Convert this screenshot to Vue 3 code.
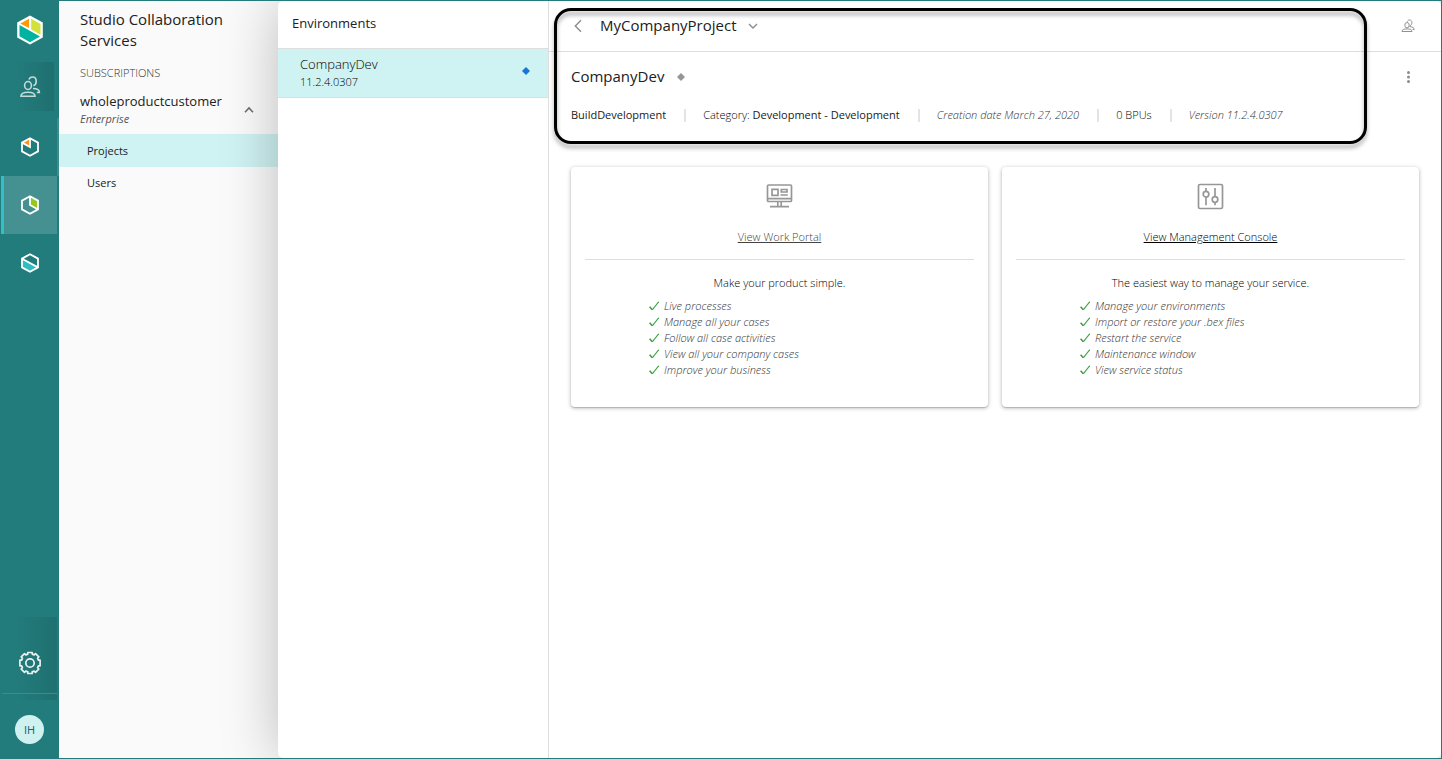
<script setup>
const cards = [
  {
    icon: 'portal',
    link: 'View Work Portal',
    muted: true,
    lead: 'Make your product simple.',
    items: [
      'Live processes',
      'Manage all your cases',
      'Follow all case activities',
      'View all your company cases',
      'Improve your business',
    ],
  },
  {
    icon: 'console',
    link: 'View Management Console',
    muted: false,
    lead: 'The easiest way to manage your service.',
    items: [
      'Manage your environments',
      'Import or restore your .bex files',
      'Restart the service',
      'Maintenance window',
      'View service status',
    ],
  },
]
</script>

<template>
  <div class="app">
    <nav class="rail" aria-label="Applications">
      <a class="logo" href="#" aria-label="Home">
        <svg width="28" height="30" viewBox="0 0 28 30">
          <path d="M14 .5 26.800 7.500v15L14 29.500 1.200 22.500V7.500Z" fill="#fff" />
          <path d="M13 3.800v9.200L4.300 8.500Z" fill="#ff9a00" />
          <path d="M15.200 3.800 24.500 9v10.800l-9.300-5.400Z" fill="#d3e13b" />
          <path d="M3.500 10 24 21.500 14 27.200 3.500 21.200Z" fill="#00b3a1" />
        </svg>
      </a>
      <button class="rail-item people" aria-label="People">
        <svg width="22" height="24" viewBox="0 0 22 24" fill="none" stroke="#c3dcdb" stroke-width="1.600">
          <ellipse cx="9" cy="10.500" rx="3.400" ry="4" />
          <path d="M2 21.300c0-3 2.500-4 7-4s7 1 7 4Z" />
          <path d="M10 4.600c.6-1.800 2-2.600 3.500-2.600 2.200 0 3.700 1.800 3.700 4.200s-1.200 4-2.800 4.400M14 13.500c4 .1 6.400 1.300 6.400 4h-2.600" />
        </svg>
      </button>
      <button class="rail-item first" aria-label="Modeler">
        <svg width="20" height="22" viewBox="0 0 20 22" fill="none" stroke="#fff" stroke-width="1.800">
          <path d="M9.500 3v8L3 7Z" fill="#f7941d" stroke="none" />
          <path d="M10 2.200 18 6.600v8.800L10 19.800 2 15.400V6.600ZM10 2.500V11L2.500 6.900" />
        </svg>
      </button>
      <button class="rail-item active" aria-label="Studio">
        <svg width="20" height="22" viewBox="0 0 20 22" fill="none" stroke="#fff" stroke-width="1.800">
          <path d="M10 3 18 7v8l-8-4Z" fill="#94c81e" stroke="none" />
          <path d="M10 2.200 18 6.600v8.800L10 19.800 2 15.400V6.600ZM10 2.500V11l7.700 4.200" />
        </svg>
      </button>
      <button class="rail-item" aria-label="Automation">
        <svg width="20" height="22" viewBox="0 0 20 22" fill="none" stroke="#fff" stroke-width="1.800">
          <path d="M2 7 18 15.400l-8 4.200-8-4.200Z" fill="#2dbdc3" stroke="none" />
          <path d="M10 2.200 18 6.600v8.800L10 19.800 2 15.400V6.600ZM2 6.800l16 8.600" />
        </svg>
      </button>
      <div class="rail-bottom">
        <button class="gear" aria-label="Settings">
          <svg width="24" height="24" viewBox="0 0 24 24" fill="none" stroke="#e9f2f1" stroke-width="1.700" stroke-linejoin="round">
            <path d="M9.800 1.500h4.400v1.600l2 .8 1.300-1.200 3.300 3.200-1.200 1.400.8 1.900h1.700v5.600h-1.700l-.8 1.900 1.200 1.400-3.300 3.200-1.300-1.200-2 .8v1.600H9.800v-1.600l-2-.8-1.300 1.200-3.300-3.200 1.200-1.400-.8-1.900H1.900V9.200h1.700l.8-1.900-1.200-1.400 3.300-3.200 1.300 1.200 2-.8Z" />
            <circle cx="12" cy="12" r="4.200" />
          </svg>
        </button>
        <div class="account"><button class="avatar">IH</button></div>
      </div>
    </nav>

    <aside class="sidebar">
      <h1>Studio Collaboration Services</h1>
      <p class="caption">SUBSCRIPTIONS</p>
      <button class="subscription">
        <span class="sub-text">
          <span class="sub-name">wholeproductcustomer</span>
          <em>Enterprise</em>
        </span>
        <svg width="12" height="8" viewBox="0 0 12 8" fill="none" stroke="#6e6e6e" stroke-width="1.600"><path d="M2 6.300 6 2l4 4.300" /></svg>
      </button>
      <a class="side-link selected" href="#">Projects</a>
      <a class="side-link" href="#">Users</a>
    </aside>

    <div class="content">
      <section class="environments">
        <h2>Environments</h2>
        <a class="environment" href="#">
          <span class="env-text">
            <span class="env-name">CompanyDev</span>
            <span class="env-version">11.2.4.0307</span>
          </span>
          <svg width="8" height="8" viewBox="0 0 8 8"><path d="M4 0 8 4 4 8 0 4Z" fill="#1976d8" /></svg>
        </a>
      </section>

      <main>
        <header class="head">
          <div class="topbar">
            <button class="icon-btn" aria-label="Back">
              <svg width="12" height="14" viewBox="0 0 12 14" fill="none" stroke="#8c8c8c" stroke-width="1.400"><path d="M9 1.300 3.300 7l5.700 5.700" /></svg>
            </button>
            <span class="project">MyCompanyProject</span>
            <button class="icon-btn" aria-label="Choose project">
              <svg width="12" height="8" viewBox="0 0 12 8" fill="none" stroke="#8c8c8c" stroke-width="1.400"><path d="M2 2l4 4 4-4" /></svg>
            </button>
            <button class="icon-btn end" aria-label="Members">
              <svg width="14" height="14" viewBox="0 0 14 14" fill="none" stroke="#909090" stroke-width="1">
                <ellipse cx="6" cy="6.200" rx="2.200" ry="2.700" />
                <path d="M1 12.500c0-2 1.600-2.400 5-2.600 3.400.2 5 .6 5 2.600Z" />
                <path d="M6.300 2.600C6.800 1.400 7.700 1 8.600 1c1.400 0 2.300 1.100 2.300 2.700 0 1.500-.7 2.700-2 3v1c2.500.3 4.300.8 4.300 2.800h-1.500" />
              </svg>
            </button>
          </div>
          <div class="title-row">
            <h2>CompanyDev</h2>
            <svg width="8" height="8" viewBox="0 0 8 8"><path d="M4 0 8 4 4 8 0 4Z" fill="#969696" /></svg>
            <button class="icon-btn end" aria-label="More actions">
              <svg width="14" height="14" viewBox="0 0 14 14" fill="#8c8c8c"><circle cx="7.500" cy="2.500" r="1.500" /><circle cx="7.500" cy="7" r="1.500" /><circle cx="7.500" cy="11.500" r="1.500" /></svg>
            </button>
          </div>
          <ul class="meta">
            <li><b>BuildDevelopment</b></li>
            <li>Category: <b>Development - Development</b></li>
            <li><em>Creation date March 27, 2020</em></li>
            <li>0 BPUs</li>
            <li><em>Version 11.2.4.0307</em></li>
          </ul>
          <div class="highlight"></div>
        </header>

        <div class="cards">
          <article v-for="card in cards" :key="card.link" class="card">
            <div class="card-top">
              <svg v-if="card.icon === 'portal'" width="28" height="28" viewBox="0 0 28 28" fill="none" stroke="#979797" stroke-width="1.700">
                <rect x="1.500" y="3" width="24" height="16.500" rx="1" />
                <path d="M1.500 16.600h24M11.800 19.500v4.500M15.200 19.500v4.500M4 24.700h19" />
                <path d="M6 7.300h6v6H6ZM15.300 7.500h5.700v2.500h-5.700ZM14.500 13h7.300" />
              </svg>
              <svg v-else width="28" height="28" viewBox="0 0 28 28" fill="none" stroke="#979797" stroke-width="1.700">
                <rect x="1.500" y="2.500" width="24" height="24" rx="1.500" />
                <path d="M9 6v3.500M9 15.100v8.200M18 6v8.700M18 20.300v3" />
                <circle cx="9" cy="12.200" r="2.800" />
                <circle cx="18" cy="17.500" r="2.800" />
              </svg>
              <a href="#" :class="{ muted: card.muted }">{{ card.link }}</a>
            </div>
            <p>{{ card.lead }}</p>
            <ul>
              <li v-for="item in card.items" :key="item">
                <svg width="10" height="10" viewBox="0 0 10 10" fill="none" stroke="#43a047"><path d="M.6 5.800 3.300 8.800" stroke-width="1.600" /><path d="M3.300 8.800 9.600.8" stroke-width="1.100" /></svg>
                <em>{{ item }}</em>
              </li>
            </ul>
          </article>
        </div>
      </main>
    </div>
  </div>
</template>

<style>
body { margin: 0; }
</style>

<style scoped>
* { box-sizing: border-box; }
.app {
  display: flex;
  min-height: 100vh;
  border: 1px solid #237c7c;
  border-left: 0;
  overflow: hidden;
  background: #fafafa;
  color: #212121;
  font: 400 11px/16px "Open Sans", "Noto Sans", sans-serif;
}
button { padding: 0; border: 0; background: none; font: inherit; color: inherit; cursor: pointer; }
a { color: inherit; text-decoration: none; }
h1, h2, p, ul { margin: 0; padding: 0; }
ul { list-style: none; }
svg { display: block; flex: none; }
b { font-weight: 500; }

.rail { display: flex; flex-direction: column; flex: none; width: 59px; background: #237c7c; }
.logo { display: grid; place-items: center; height: 57px; }
.rail-item { display: grid; place-items: center; height: 58px; padding-left: 1px; }
.people {
  margin-bottom: 2px;
  padding-left: 0;
  background: linear-gradient(90deg, #237c7c, #1f7070) 14px 4px / 40px 49px no-repeat;
}
.first { border-right: 2px solid #3d8b8b; padding-left: 3px; }
.active { margin: 0 2px 0 1px; border-left: 3px solid #33bfc4; padding: 0 2px 0 0; background: #459090; }
.rail-bottom {
  margin-top: auto;
  background: linear-gradient(90deg, #237c7c, #1f7070) 14px 0 / 43px 83px no-repeat;
}
.gear { display: grid; place-items: center; width: 100%; height: 76px; padding: 16px 0 0 1px; }
.account { position: relative; padding: 22px 0 14px 15px; }
.account::before { content: ""; position: absolute; top: 0; left: 2px; right: 2px; height: 1px; background: #3d8b8b; }
.avatar { display: grid; place-items: center; width: 29px; height: 29px; border-radius: 50%; background: #cff2f1; color: #20605f; font-size: 11px; }

.sidebar { flex: none; width: 219px; padding-top: 8px; }
.sidebar h1 { padding: 0 50px 0 21px; font-size: 15px; line-height: 21px; font-weight: 400; }
.caption { padding: 14px 21px 11px; color: #333; font-weight: 300; }
.subscription { display: flex; align-items: center; width: 100%; padding: 0 23px 7px 21px; text-align: left; }
.sub-text { display: grid; flex: 1; }
.sub-name { font-size: 13px; line-height: 18px; font-weight: 500; }
.sub-text em { line-height: 17px; font-weight: 400; color: #555; }
.side-link { display: flex; align-items: center; height: 32px; padding-left: 28px; }
.selected { height: 33px; background: #cff2f2; }

.content {
  display: flex;
  flex: 1;
  min-width: 0;
  border-radius: 5px;
  background: #fff;
  box-shadow: 0 0 56px rgba(0, 0, 0, 0.25);
}
.environments { flex: none; width: 271px; border-right: 1px solid #dedede; }
.environments h2 { height: 48px; padding: 11px 14px; border-bottom: 1px solid #dedede; font-size: 13px; line-height: 22px; font-weight: 500; }
.environment { display: flex; align-items: center; padding: 6px 18px 7px 22px; border-bottom: 1px solid #dedede; background: #cff2f2; }
.env-text { display: grid; flex: 1; font-weight: 300; color: #000; }
.env-name { font-size: 13px; line-height: 19px; }
.env-version { line-height: 16px; }
.environment svg { margin-bottom: 4px; }

main { flex: 1; min-width: 0; font-weight: 300; color: #000; }
.head { position: relative; padding-bottom: 22px; }
.topbar { display: flex; align-items: center; height: 51px; padding: 0 26px 0 23px; border-bottom: 1px solid #dedede; }
.project, .title-row h2 { padding-bottom: 2px; font-size: 15px; line-height: 20px; font-weight: 400; color: #212121; }
.project { padding-left: 16px; padding-right: 10px; }
.end { margin-left: auto; }
.title-row { display: flex; align-items: center; gap: 13px; height: 50px; padding: 0 26px 0 22px; }
.meta { display: flex; align-items: center; height: 26px; padding-left: 22px; }
.meta li { display: flex; align-items: center; white-space: pre; }
.meta li + li::before { content: ""; width: 2px; height: 13px; margin: 0 17px 0 18px; background: #e4e4e4; }
.meta b { color: #212121; }
em { color: #333; font-weight: 300; }
.highlight {
  position: absolute;
  inset: 7px 74px 6px 5px;
  border: 3px solid #000;
  border-radius: 17px;
  filter: drop-shadow(0 4px 2px rgba(0, 0, 0, 0.35));
  pointer-events: none;
}

.cards { display: grid; grid-template-columns: 1fr 1fr; gap: 14px; padding: 17px 22px; }
.card {
  padding: 15px 14px 29px;
  border-radius: 4px;
  background: #fff;
  box-shadow: 0 1px 4px rgba(0, 0, 0, 0.3), 0 1px 1px rgba(0, 0, 0, 0.15);
}
.card-top { display: grid; justify-items: center; gap: 19px; padding-bottom: 14px; border-bottom: 1px solid #dedede; }
.card-top a { text-decoration: underline; }
.card-top .muted { color: #444; }
.card p { padding: 15px 0 7px; text-align: center; }
.card ul { width: 261px; max-width: 100%; margin: 0 auto; }
.card li { display: flex; align-items: center; gap: 5px; }
</style>
